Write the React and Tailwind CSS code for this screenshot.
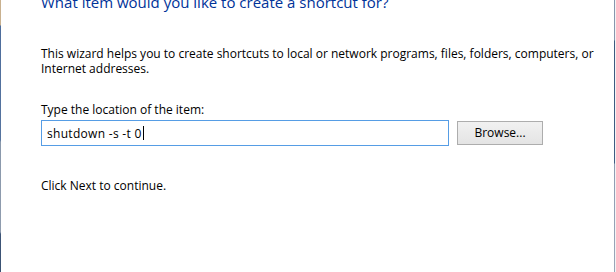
export default function App() {
  return (
    <div
      className="flex h-[272px] w-[616px] overflow-hidden bg-white text-black"
      style={{ fontFamily: '"Open Sans", "Noto Sans", sans-serif' }}
    >
      {/* window frame edge, left */}
      <div className="w-px shrink-0 bg-[linear-gradient(to_bottom,#c9b18f_0px,#c9b18f_25px,#4d6d9c_26px,#56749f_140px,#8a99ac_142px,#8f9cae_232px,#3d5577_234px,#3a5273_272px)]" />

      <div className="flex-1 pl-[40px]">
        <h1 className="mt-[-8px] text-[15px] leading-[20px] font-normal text-[#003399]">
          What item would you like to create a shortcut for?
        </h1>

        <p className="mt-[34px] w-[570px] text-[12px] leading-[15px]">
          This wizard helps you to create shortcuts to local or network programs, files, folders, computers, or Internet addresses.
        </p>

        <div className="mt-[26px] text-[12px] leading-[15px]">Type the location of the item:</div>

        <div className="mt-[3px] flex items-start">
          <div className="h-[26px] w-[408px] border border-[#569de5] bg-white pt-[3px] pl-[5px] text-[12px] leading-[15px] tracking-[0.3px]">
            shutdown -s -t 0<span className="ml-px inline-block h-[14px] w-px translate-y-[2px] bg-black align-baseline" />
          </div>
          <button className="mt-[1px] ml-[8px] h-[24px] w-[86px] border border-[#adadad] bg-gradient-to-b from-[#f1f1f1] to-[#e4e4e4] text-[12px] leading-[22px]">
            Browse...
          </button>
        </div>

        <div className="mt-[32px] text-[12px] leading-[15px]">Click Next to continue.</div>
      </div>

      {/* window frame edge, right */}
      <div className="w-px shrink-0 bg-[linear-gradient(to_bottom,#8696ad_0px,#8696ad_40px,#3c5a80_41px,#3f5d84_163px,#8e9cb3_164px,#9aa6b8_272px)]" />
      <div className="w-px shrink-0 bg-[#f4f4f4]" />
    </div>
  )
}
